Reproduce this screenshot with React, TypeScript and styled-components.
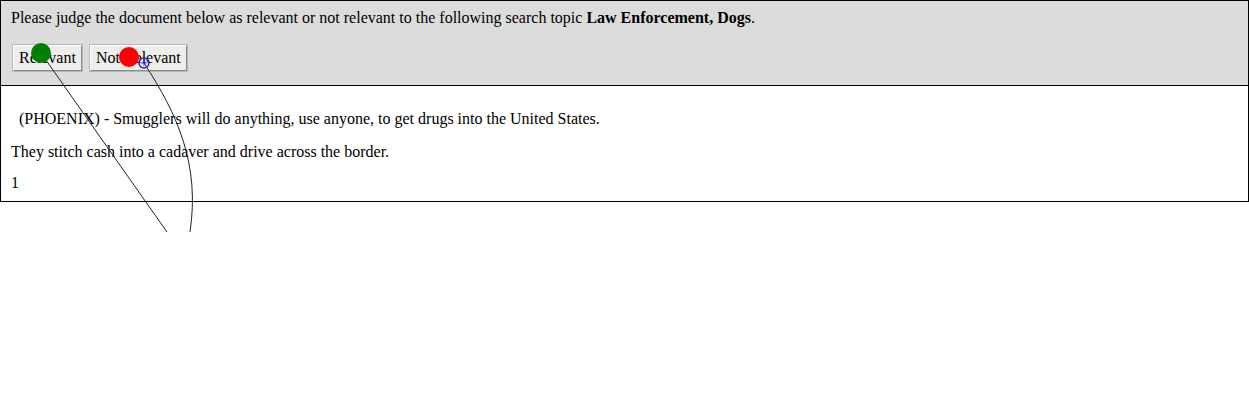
import React from "react";
import styled, { createGlobalStyle } from "styled-components";

const Global = createGlobalStyle`
  html, body { margin: 0; padding: 0; background: #fff; }
  body { font-family: "Liberation Serif", "Times New Roman", serif; font-size: 16px; color: #000; }
`;

const Page = styled.div`
  position: relative;
  width: 1249px;
  height: 400px;
`;

const Header = styled.div`
  background: #dcdcdc;
  border: 1px solid #000;
  padding: 8px 10px 14px;
`;

const Prompt = styled.div`
  line-height: 18px;
`;

const Buttons = styled.div`
  display: flex;
  gap: 8px;
  margin-top: 18px;
  padding-left: 2px;
`;

const Button = styled.button`
  font-family: "Liberation Serif", "Times New Roman", serif;
  font-size: 16px;
  color: #000;
  background: #efedea;
  border: 1px solid;
  border-color: #fff #8a8a8a #8a8a8a #fff;
  box-shadow: 0 0 0 1px #b8b8b8;
  padding: 2px 5px;
  height: 26px;
  line-height: 20px;
`;

const Doc = styled.div`
  border: 1px solid #000;
  border-top: none;
  padding: 8px 10px 9px;
`;

const Para = styled.p<{ $gap: number }>`
  margin: ${(p) => p.$gap}px 0 0;
  line-height: 18px;
  white-space: pre;
`;

const Overlay = styled.svg`
  position: absolute;
  left: 0;
  top: 0;
  pointer-events: none;
`;

export default function App() {
  return (
    <Page>
      <Global />
      <Header>
        <Prompt>
          Please judge the document below as relevant or not relevant to the following search topic{" "}
          <b>Law Enforcement, Dogs</b>.
        </Prompt>
        <Buttons>
          <Button>Relevant</Button>
          <Button>Not Relevant</Button>
        </Buttons>
      </Header>
      <Doc>
        <Para $gap={16}>{"  (PHOENIX) - Smugglers will do anything, use anyone, to get drugs into the United States."}</Para>
        <Para $gap={15}>They stitch cash into a cadaver and drive across the border.</Para>
        <Para $gap={13}>1</Para>
      </Doc>
      <Overlay width="1249" height="232" viewBox="0 0 1249 232">
        <line x1="41" y1="53" x2="167" y2="232" stroke="#222" strokeWidth="1" />
        <path d="M144 63 C 178 115, 200 165, 190 232" fill="none" stroke="#222" strokeWidth="1" />
        <circle cx="41" cy="53" r="10" fill="#008000" />
        <circle cx="129" cy="57" r="10" fill="#ff0000" />
        <circle cx="144" cy="63" r="5" fill="none" stroke="#2222cc" strokeWidth="1.5" />
        <path d="M141 63 L147 63 M144 60 L144 66" stroke="#2222cc" strokeWidth="0.8" />
      </Overlay>
    </Page>
  );
}
